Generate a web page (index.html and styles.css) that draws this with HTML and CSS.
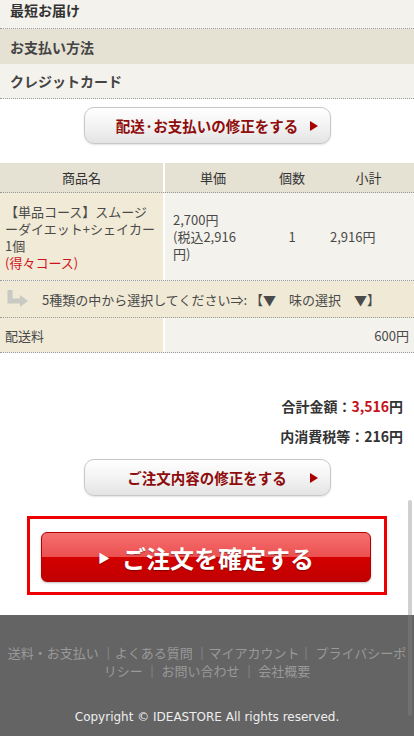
FILE: index.html
```html
<!DOCTYPE html>
<html lang="ja">
<head>
    <meta charset="UTF-8">
    <meta name="viewport" content="width=device-width, initial-scale=1.0">
    <title>ご注文内容の確認</title>
    <link rel="stylesheet" href="styles.css">
</head>
<body>

    <div class="page">
        <!-- 配送・お支払い情報 -->
        <div class="info">
            <div class="info-row light first">最短お届け</div>
            <div class="info-row head">お支払い方法</div>
            <div class="info-row light last">クレジットカード</div>
        </div>

        <div class="btn-wrap">
            <a class="sub-btn" href="#">配送·お支払いの修正をする</a>
        </div>

        <!-- カート -->
        <div class="cart">
            <div class="cart-row cart-head">
                <div class="c-name">商品名</div>
                <div class="c-price">単価</div>
                <div class="c-qty">個数</div>
                <div class="c-sub">小計</div>
            </div>
            <div class="cart-row cart-item">
                <div class="c-name">【単品コース】スムージーダイエット+シェイカー1個<br><span class="deal">(得々コース)</span></div>
                <div class="c-price">2,700円<br>(税込2,916円)</div>
                <div class="c-qty">1</div>
                <div class="c-sub">2,916円</div>
            </div>
            <div class="cart-option">
                <svg class="turn" width="24" height="18" viewBox="0 0 24 18">
                    <path d="M5 0 V11 H16" fill="none" stroke="#c9c9c4" stroke-width="5"/>
                    <path d="M15 5 L23 11 L15 17 Z" fill="#c9c9c4"/>
                </svg>
                <span>5種類の中から選択してください⇒: 【▼　味の選択　▼】</span>
            </div>
            <div class="cart-row cart-ship">
                <div class="c-name">配送料</div>
                <div class="c-fee">600円</div>
            </div>
        </div>

        <div class="totals">
            <p>合計金額：<span class="red">3,516</span>円</p>
            <p>内消費税等：216円</p>
        </div>

        <div class="btn-wrap">
            <a class="sub-btn" href="#">ご注文内容の修正をする</a>
        </div>

        <div class="confirm-wrap">
            <div class="confirm-box">
                <a class="confirm-btn" href="#"><span class="tri">▶</span>ご注文を確定する</a>
            </div>
        </div>

        <footer class="footer">
            <p class="links">送料・お支払い ｜よくある質問 ｜マイアカウント｜ プライバシーポリシー ｜ お問い合わせ ｜ 会社概要</p>
            <p class="copy">Copyright © IDEASTORE All rights reserved.</p>
        </footer>

        <div class="scrollbar"></div>
    </div>

</body>
</html>
```

FILE: styles.css
```css
body { margin: 0; font-family: "Noto Sans CJK JP", "Noto Sans", sans-serif; color: #444; background: #fff; overflow: hidden; }
a { text-decoration: none; }
p { margin: 0; }
.page { position: relative; width: 414px; height: 736px; overflow: hidden; }

/* info */
.info { margin-top: -9px; }
.info-row { display: flex; align-items: center; height: 35px; box-sizing: border-box; padding-left: 10px; font-size: 14px; font-weight: bold; color: #444; }
.info-row.first { height: 38px; border-bottom: 1px dotted #999; color: #333; }
.info-row.last { border-bottom: 1px dotted #999; }
.light { background: #f4f2ec; }
.head { background: #e5e1d3; }

/* buttons */
.btn-wrap { display: flex; justify-content: center; padding-top: 8px; }
.sub-btn { position: relative; display: flex; align-items: center; justify-content: center; width: 247px; height: 37px; box-sizing: border-box; border: 1px solid #c8c8c8; border-radius: 10px; background: linear-gradient(#ffffff, #f3f3f3 50%, #e4e4e4); box-shadow: 0 1px 2px rgba(0,0,0,0.12); color: #8e0c0c; font-size: 14.5px; font-weight: bold; }
.sub-btn::after { content: ""; position: absolute; right: 12px; top: 50%; margin-top: -5px; border-left: 8px solid #a00; border-top: 5px solid transparent; border-bottom: 5px solid transparent; }

/* cart */
.cart { margin-top: 19px; font-size: 13px; color: #4a4a4a; }
.cart-row { display: grid; grid-template-columns: 163px 98px 62px 1fr; border-bottom: 1px dotted #999; }
.cart-row > div { box-sizing: border-box; }
.cart-head { height: 29px; background: #e5e1d3; color: #333; text-align: center; }
.cart-head > div { display: flex; align-items: center; justify-content: center; }
.cart-head .c-price, .cart-item .c-price, .cart-ship .c-fee { border-left: 2px solid #fff; }
.cart-item { background: #f4f2ec; min-height: 87px; }
.cart-item > div { display: flex; flex-direction: column; justify-content: center; line-height: 17px; }
.cart-item .c-name { background: #f0ead6; padding: 8px 5px; }
.cart-item .c-price { padding: 0 12px 0 8px; }
.cart-item .c-qty { align-items: center; }
.cart-item .c-sub { padding-left: 7px; }
.deal { color: #d0121b; }
.cart-option { display: flex; align-items: center; height: 37px; box-sizing: border-box; border-bottom: 1px dotted #999; background: #efe9d5; padding-left: 5px; }
.turn { margin-right: 13px; }
.cart-ship { grid-template-columns: 163px 1fr; height: 34px; background: #f4f2ec; }
.cart-ship > div { display: flex; align-items: center; }
.cart-ship .c-name { background: #f0ead6; padding-left: 5px; }
.cart-ship .c-fee { justify-content: flex-end; padding-right: 5px; }

/* totals */
.totals { margin-top: 38px; padding-right: 11px; text-align: right; font-size: 14px; font-weight: bold; color: #333; line-height: 30px; }
.red { color: #c4121b; }

/* confirm */
.confirm-wrap { display: flex; justify-content: center; padding-top: 20px; }
.confirm-box { width: 360px; box-sizing: border-box; border: 3px solid #ee0000; padding: 13px 0 10px 11px; }
.confirm-btn { display: flex; align-items: center; justify-content: center; width: 330px; height: 50px; box-sizing: border-box; border: 1px solid #b30000; border-radius: 6px; background: linear-gradient(#f57070, #ec5050 50%, #d40000 51%, #c00000); box-shadow: 0 1px 2px rgba(0,0,0,0.25); color: #fff; font-size: 24px; font-weight: bold; text-shadow: 0 1px 1px rgba(0,0,0,0.35); }
.confirm-btn .tri { font-size: 12px; margin-right: 12px; }

/* footer */
.footer { margin-top: 20px; height: 121px; box-sizing: border-box; background: #646464; padding: 29px 5px 0; text-align: center; }
.links { color: #999; font-size: 13px; line-height: 18px; }
.copy { margin-top: 28px; color: #eee; font-family: "DejaVu Sans", sans-serif; font-size: 12px; line-height: 18px; }

.scrollbar { position: absolute; right: 2px; top: 500px; width: 4px; height: 216px; background: rgba(131,131,131,0.38); border-radius: 2px; }
```
